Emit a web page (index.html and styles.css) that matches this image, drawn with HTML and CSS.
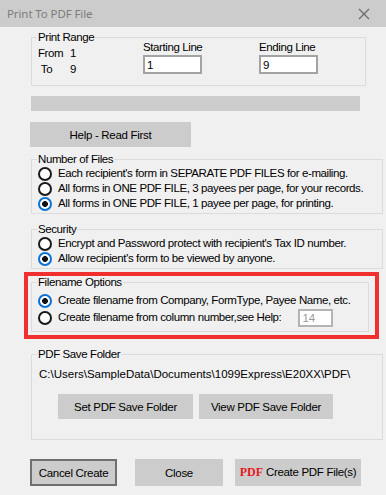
FILE: index.html
```html
<!DOCTYPE html>
<html lang="en">
<head>
    <meta charset="UTF-8">
    <meta name="viewport" content="width=device-width, initial-scale=1.0">
    <title>Print To PDF File</title>
    <link rel="stylesheet" href="styles.css">
</head>
<body>
    <div class="window">
        <div class="titlebar">
            <span class="title">Print To PDF File</span>
            <svg class="close-x" width="12" height="12" viewBox="0 0 12 12">
                <path d="M1 1 L11 11 M11 1 L1 11" stroke="#6b6b6b" stroke-width="1.2" fill="none"/>
            </svg>
        </div>

        <div class="content">
            <fieldset class="group range">
                <legend>Print Range</legend>
                <div class="range-grid">
                    <div class="from-to">
                        <div class="ft-row"><span class="ft-label">From</span><span>1</span></div>
                        <div class="ft-row"><span class="ft-label">&nbsp;To</span><span>9</span></div>
                    </div>
                    <div class="line-field">
                        <label for="start-line">Starting Line</label>
                        <input type="text" id="start-line" class="line-input" value="1">
                    </div>
                    <div class="line-field">
                        <label for="end-line">Ending Line</label>
                        <input type="text" id="end-line" class="line-input" value="9">
                    </div>
                </div>
            </fieldset>

            <div class="progress"></div>

            <button type="button" class="btn help-btn">Help - Read First</button>

            <fieldset class="group files">
                <legend>Number of Files</legend>
                <label class="opt"><input type="radio" name="files"><span>Each recipient's form in SEPARATE PDF FILES for e-mailing.</span></label>
                <label class="opt"><input type="radio" name="files"><span>All forms in ONE PDF FILE, 3 payees per page, for your records.</span></label>
                <label class="opt"><input type="radio" name="files" checked><span>All forms in ONE PDF FILE, 1 payee per page, for printing.</span></label>
            </fieldset>

            <fieldset class="group security">
                <legend>Security</legend>
                <label class="opt"><input type="radio" name="security"><span>Encrypt and Password protect with recipient's Tax ID number.</span></label>
                <label class="opt"><input type="radio" name="security" checked><span>Allow recipient's form to be viewed by anyone.</span></label>
            </fieldset>

            <div class="highlight">
                <fieldset class="group filename">
                    <legend>Filename Options</legend>
                    <label class="opt"><input type="radio" name="filename" checked><span>Create filename from Company, FormType, Payee Name, etc.</span></label>
                    <div class="opt opt-col">
                        <label class="opt"><input type="radio" name="filename"><span>Create filename from column number,see Help:</span></label>
                        <input type="text" class="col-input" value="14" disabled>
                    </div>
                </fieldset>
            </div>

            <fieldset class="group folder">
                <legend>PDF Save Folder</legend>
                <div class="path">C:\Users\SampleData\Documents\1099Express\E20XX\PDF\</div>
                <div class="folder-buttons">
                    <button type="button" class="btn set-btn">Set PDF Save Folder</button>
                    <button type="button" class="btn view-btn">View PDF Save Folder</button>
                </div>
            </fieldset>

            <div class="actions">
                <button type="button" class="btn cancel-btn">Cancel Create</button>
                <button type="button" class="btn close-btn">Close</button>
                <button type="button" class="btn create-btn"><b class="pdf-mark">PDF</b> Create PDF File(s)</button>
            </div>
        </div>
    </div>
</body>
</html>
```

FILE: styles.css
```css
body {
    margin: 0;
    font-family: "Liberation Sans", Arial, sans-serif;
    font-size: 11.5px;
    letter-spacing: -0.4px;
    color: #000;
}
.window {
    width: 386px;
    height: 495px;
    background-color: #f0f0f0;
    overflow: hidden;
}
.titlebar {
    height: 27px;
    background-color: #cccccc;
    display: flex;
    align-items: center;
    justify-content: space-between;
    padding: 0 16px 0 7px;
}
.title {
    font-family: "Noto Sans", sans-serif;
    font-size: 11.5px;
    letter-spacing: -0.1px;
    color: #7d7d7d;
}
.close-x {
    display: block;
}
.content {
    padding-left: 31px;
}

/* group boxes */
.group {
    margin: 0;
    padding: 0 0 0 6px;
    border: 1px solid #dcdcdc;
    min-width: 0;
}
.group legend {
    padding: 0 1px;
    margin-left: -1px;
    line-height: 10px;
}

.range {
    margin-top: 5px;
    width: 327px;
    padding-bottom: 8px;
}
.range-grid {
    display: grid;
    grid-template-columns: 105px 116px 1fr;
    align-items: start;
    margin-top: -2px;
}
.from-to {
    padding-top: 5px;
}
.ft-row {
    display: flex;
    line-height: 16px;
}
.ft-label {
    width: 32px;
}
.line-field label {
    display: block;
    line-height: 14px;
}
.line-input {
    display: block;
    box-sizing: border-box;
    width: 59px;
    height: 19px;
    margin: 1px 0 0;
    padding: 0 2px;
    border: 2px solid #a3a3a3;
    background: #fff;
    font-family: inherit;
    font-size: 11.5px;
}

.progress {
    width: 329px;
    height: 15px;
    margin-top: 10px;
    background-color: #cccccc;
}

.btn {
    font-family: inherit;
    font-size: 11.5px;
    letter-spacing: -0.3px;
    color: #000;
    background-color: #cccccc;
    border: 1px solid #cccccc;
    padding: 0;
    box-sizing: border-box;
    white-space: nowrap;
}
.help-btn {
    display: block;
    width: 161px;
    height: 25px;
    margin: 11px 0 0 -1px;
}

.opt {
    display: flex;
    align-items: center;
    line-height: 15px;
    white-space: nowrap;
}
.opt input[type="radio"] {
    appearance: none;
    -webkit-appearance: none;
    box-sizing: border-box;
    width: 14px;
    height: 14px;
    margin: 0 6px 0 0;
    border: 2px solid #1a1a1a;
    border-radius: 50%;
    background: #fff;
    flex-shrink: 0;
}
.opt input[type="radio"]:checked {
    border-color: #0a72d4;
    background: radial-gradient(circle, #111 0 2.6px, #fff 3.2px);
}

.files {
    margin-top: 7px;
    width: 344px;
    padding-top: 2px;
    padding-bottom: 2px;
}
.security {
    margin-top: 10px;
    width: 344px;
    padding-top: 2px;
    padding-bottom: 2px;
}

.highlight {
    margin: 3px 0 0 -7px;
    width: 344px;
    border: 4px solid #f02f2f;
    padding: 1px 0 3px 3px;
}
.filename {
    width: 338px;
    box-sizing: border-box;
    padding-top: 6px;
    padding-bottom: 4px;
}
.opt-col {
    height: 19px;
}
.col-input {
    box-sizing: border-box;
    width: 35px;
    height: 18px;
    margin-left: 17px;
    padding: 0 2px;
    border: 2px solid #b4b4b4;
    background: #fff;
    color: #9a9a9a;
    font-family: inherit;
    font-size: 11.5px;
}

.folder {
    margin-top: 10px;
    width: 344px;
    padding-bottom: 20px;
}
.path {
    line-height: 14px;
    margin-top: 8px;
    padding-left: 1px;
    letter-spacing: 0;
}
.folder-buttons {
    display: flex;
    gap: 6px;
    margin: 13px 0 0 20px;
}
.folder-buttons .btn {
    height: 25px;
}
.set-btn {
    width: 135px;
}
.view-btn {
    width: 134px;
}

.actions {
    display: flex;
    margin: 19px 0 0 -1px;
}
.actions .btn {
    height: 27px;
}
.cancel-btn {
    width: 87px;
    border: 2px solid #6f6f6f;
}
.close-btn {
    width: 88px;
    margin-left: 18px;
}
.create-btn {
    width: 126px;
    margin-left: 12px;
}
.pdf-mark {
    font-family: "Liberation Serif", "Times New Roman", serif;
    color: #e8191c;
    font-size: 12px;
    letter-spacing: 0;
}
```
